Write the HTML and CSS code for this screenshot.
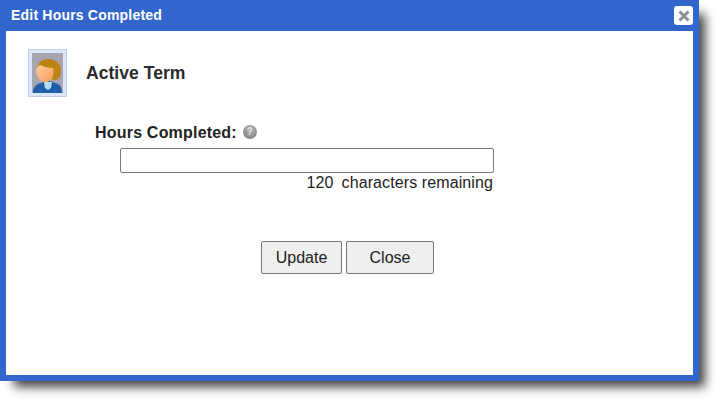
FILE: index.html
```html
<!DOCTYPE html>
<html lang="en">
<head>
    <meta charset="UTF-8">
    <title>Edit Hours Completed</title>
    <link rel="stylesheet" href="styles.css">
</head>
<body>
    <div class="dialog">
        <div class="title-bar">
            <span class="title">Edit Hours Completed</span>
            <button class="close-x" aria-label="Close">
                <svg width="12" height="12" viewBox="0 0 12 12"><path d="M1.5 1.5L10.5 10.5M10.5 1.5L1.5 10.5" stroke="#8b9094" stroke-width="3"/></svg>
            </button>
        </div>
        <div class="content">
            <div class="term-row">
                <div class="photo">
                    <svg width="31" height="40" viewBox="0 0 31 40">
                        <defs>
                            <linearGradient id="skin" x1="0" y1="0" x2="1" y2="1">
                                <stop offset="0" stop-color="#ffd0a0"/>
                                <stop offset="1" stop-color="#f59a58"/>
                            </linearGradient>
                        </defs>
                        <rect width="31" height="40" fill="#a6a5b0"/>
                        <path d="M1 40c0-6 3-9 8-10l5-2h4l5 2c5 1 7 4 7 10z" fill="#1f5ea8"/>
                        <path d="M12 29h8l-1 6-3 2-3-2z" fill="#b5dcf0"/>
                        <path d="M5 15C6 9 11 6 17 6c7 0 12 5 12 11 0 5-2 9-5 10-2 0-5-1-7-2z" fill="#bb8410"/>
                        <path d="M4 18c0-3 2-5 4-6 4 2 9 3 13 3 1 4 1 7-1 10-2 3-5 5-8 4-4-1-8-6-8-11z" fill="url(#skin)"/>
                    </svg>
                </div>
                <h2 class="term-name">Active Term</h2>
            </div>
            <div class="field">
                <div class="field-label">
                    <label for="hours">Hours Completed:</label>
                    <span class="help">?</span>
                </div>
                <input id="hours" type="text" class="field-input">
                <div class="counter"><span class="count">120</span>characters remaining</div>
            </div>
            <div class="actions">
                <button class="btn btn-update">Update</button>
                <button class="btn btn-close">Close</button>
            </div>
        </div>
    </div>
</body>
</html>
```

FILE: styles.css
```css
html, body {
    height: 100%;
}

body {
    margin: 0;
    background: #fff;
    font-family: 'Liberation Sans', Arial, sans-serif;
    color: #222;
}

.dialog {
    width: 687px;
    height: 375px;
    border: 6px solid #3366cc;
    border-top: 0;
    background: #3366cc;
    box-shadow: 10px 10px 10px -4px #444;
}

.title-bar {
    height: 31px;
    display: flex;
    align-items: center;
    justify-content: space-between;
    padding-left: 5px;
}

.title {
    color: #fff;
    font-size: 14px;
    font-weight: bold;
    letter-spacing: 0.2px;
    margin-top: -1px;
}

.close-x {
    width: 19px;
    height: 19px;
    padding: 0;
    border: 0;
    border-radius: 3px;
    background: #fff;
    display: flex;
    align-items: center;
    justify-content: center;
}

.content {
    height: 344px;
    background: #fff;
    padding: 18px 0 0 22px;
    box-sizing: border-box;
}

.term-row {
    display: flex;
    align-items: center;
    gap: 19px;
}

.photo {
    width: 39px;
    height: 48px;
    box-sizing: border-box;
    border: 4px solid #dbe6f8;
    outline: 1px solid #c3cfe6;
    outline-offset: -1px;
    display: flex;
    align-items: center;
    justify-content: center;
}

.term-name {
    margin: 0;
    font-size: 17.6px;
    font-weight: bold;
    color: #2b2b2b;
}

.field {
    margin: 26px 0 0 67px;
}

.field-label {
    display: flex;
    align-items: center;
    gap: 6px;
    height: 20px;
    font-size: 16px;
    font-weight: bold;
    letter-spacing: 0.2px;
}

.help {
    width: 14px;
    height: 14px;
    margin-top: -3px;
    border-radius: 50%;
    background: radial-gradient(circle at 50% 35%, #b5b5b5, #777);
    color: #e4e4e4;
    font-size: 10px;
    line-height: 14px;
    text-align: center;
}

.field-input {
    display: block;
    width: 374px;
    height: 25px;
    margin: 5px 0 0 25px;
    box-sizing: border-box;
    border: 1px solid #767676;
    border-radius: 2px;
    padding: 0 2px;
}

.counter {
    width: 373px;
    margin-left: 25px;
    font-size: 16px;
    line-height: 20px;
    text-align: right;
    letter-spacing: 0.1px;
}

.count {
    margin-right: 8px;
}

.actions {
    display: flex;
    justify-content: center;
    gap: 4px;
    margin: 48px 0 0 -26px;
}

.btn {
    height: 33px;
    font-family: inherit;
    font-size: 16px;
    color: #222;
    background: #efefef;
    border: 1px solid #767676;
    border-radius: 2px;
    padding: 0;
}

.btn-update {
    width: 81px;
}

.btn-close {
    width: 88px;
}
```
